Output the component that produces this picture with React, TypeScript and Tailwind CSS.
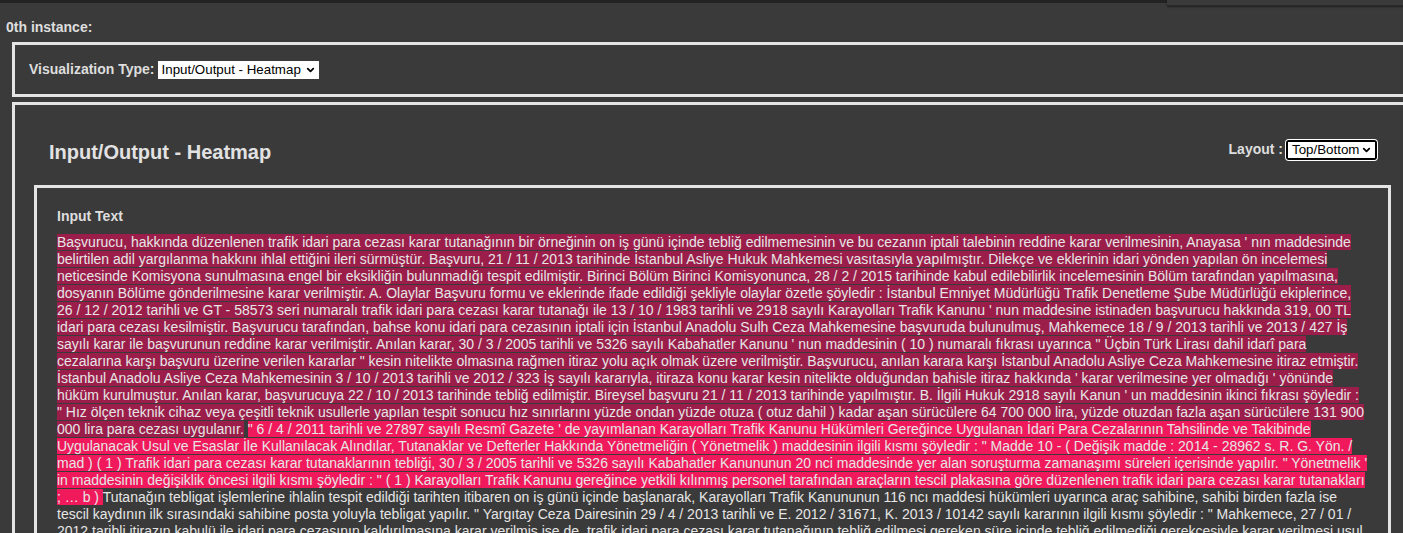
import { ChevronDown } from "lucide-react";

const DARK_SPAN =
  "Başvurucu, hakkında düzenlenen trafik idari para cezası karar tutanağının bir örneğinin on iş günü içinde tebliğ edilmemesinin ve bu cezanın iptali talebinin reddine karar verilmesinin, Anayasa ' nın maddesinde belirtilen adil yargılanma hakkını ihlal ettiğini ileri sürmüştür. Başvuru, 21 / 11 / 2013 tarihinde İstanbul Asliye Hukuk Mahkemesi vasıtasıyla yapılmıştır. Dilekçe ve eklerinin idari yönden yapılan ön incelemesi neticesinde Komisyona sunulmasına engel bir eksikliğin bulunmadığı tespit edilmiştir. Birinci Bölüm Birinci Komisyonunca, 28 / 2 / 2015 tarihinde kabul edilebilirlik incelemesinin Bölüm tarafından yapılmasına, dosyanın Bölüme gönderilmesine karar verilmiştir. A. Olaylar Başvuru formu ve eklerinde ifade edildiği şekliyle olaylar özetle şöyledir : İstanbul Emniyet Müdürlüğü Trafik Denetleme Şube Müdürlüğü ekiplerince, 26 / 12 / 2012 tarihli ve GT - 58573 seri numaralı trafik idari para cezası karar tutanağı ile 13 / 10 / 1983 tarihli ve 2918 sayılı Karayolları Trafik Kanunu ' nun maddesine istinaden başvurucu hakkında 319, 00 TL idari para cezası kesilmiştir. Başvurucu tarafından, bahse konu idari para cezasının iptali için İstanbul Anadolu Sulh Ceza Mahkemesine başvuruda bulunulmuş, Mahkemece 18 / 9 / 2013 tarihli ve 2013 / 427 İş sayılı karar ile başvurunun reddine karar verilmiştir. Anılan karar, 30 / 3 / 2005 tarihli ve 5326 sayılı Kabahatler Kanunu ' nun maddesinin ( 10 ) numaralı fıkrası uyarınca \" Üçbin Türk Lirası dahil idarî para cezalarına karşı başvuru üzerine verilen kararlar \" kesin nitelikte olmasına rağmen itiraz yolu açık olmak üzere verilmiştir. Başvurucu, anılan karara karşı İstanbul Anadolu Asliye Ceza Mahkemesine itiraz etmiştir. İstanbul Anadolu Asliye Ceza Mahkemesinin 3 / 10 / 2013 tarihli ve 2012 / 323 İş sayılı kararıyla, itiraza konu karar kesin nitelikte olduğundan bahisle itiraz hakkında ' karar verilmesine yer olmadığı ' yönünde hüküm kurulmuştur. Anılan karar, başvurucuya 22 / 10 / 2013 tarihinde tebliğ edilmiştir. Bireysel başvuru 21 / 11 / 2013 tarihinde yapılmıştır. B. İlgili Hukuk 2918 sayılı Kanun ' un maddesinin ikinci fıkrası şöyledir : \"\u00a0Hız ölçen teknik cihaz veya çeşitli teknik usullerle yapılan tespit sonucu hız sınırlarını yüzde ondan yüzde otuza ( otuz dahil ) kadar aşan sürücülere 64 700 000 lira, yüzde otuzdan fazla aşan sürücülere 131 900 000 lira para cezası uygulanır.";

const BRIGHT_SPAN =
  "\" 6 / 4 / 2011 tarihli ve 27897 sayılı Resmî Gazete ' de yayımlanan Karayolları Trafik Kanunu Hükümleri Gereğince Uygulanan İdari Para Cezalarının Tahsilinde ve Takibinde Uygulanacak Usul ve Esaslar İle Kullanılacak Alındılar, Tutanaklar ve Defterler Hakkında Yönetmeliğin ( Yönetmelik ) maddesinin ilgili kısmı şöyledir : \" Madde 10 - ( Değişik madde : 2014 - 28962 s. R. G. Yön. / mad ) ( 1 ) Trafik idari para cezası karar tutanaklarının tebliği, 30 / 3 / 2005 tarihli ve 5326 sayılı Kabahatler Kanununun 20 nci maddesinde yer alan soruşturma zamanaşımı süreleri içerisinde yapılır. \" Yönetmelik ' in maddesinin değişiklik öncesi ilgili kısmı şöyledir : \" ( 1 ) Karayolları Trafik Kanunu gereğince yetkili kılınmış personel tarafından araçların tescil plakasına göre düzenlenen trafik idari para cezası karar tutanakları ; … b ) ";

const PLAIN_TAIL =
  "Tutanağın tebligat işlemlerine ihlalin tespit edildiği tarihten itibaren on iş günü içinde başlanarak, Karayolları Trafik Kanununun 116 ncı maddesi hükümleri uyarınca araç sahibine, sahibi birden fazla ise tescil kaydının ilk sırasındaki sahibine posta yoluyla tebligat yapılır. \" Yargıtay Ceza Dairesinin 29 / 4 / 2013 tarihli ve E. 2012 / 31671, K. 2013 / 10142 sayılı kararının ilgili kısmı şöyledir : \" Mahkemece, 27 / 01 / 2012 tarihli itirazın kabulü ile idari para cezasının kaldırılmasına karar verilmiş ise de, trafik idari para cezası karar tutanağının tebliğ edilmesi gereken süre içinde tebliğ edilmediği gerekçesiyle karar verilmesi usul ve yasaya aykırıdır. Başvurucunun iddiaları yönünden yapılan incelemede, kabul edilebilirlik koşullarının bulunduğu anlaşılmıştır.";

function FakeSelect({
  label,
  className,
}: {
  label: string;
  className: string;
}) {
  return (
    <div className={`relative ${className}`}>
      <select
        defaultValue={label}
        className="block w-full h-full appearance-none bg-white text-black text-[13.33px] leading-[16px] py-0 pl-[4px] pr-[14px] outline-none font-['Liberation_Sans',Arial,sans-serif]"
      >
        <option>{label}</option>
      </select>
      <ChevronDown
        size={11}
        strokeWidth={4}
        className="absolute right-[3px] top-1/2 -translate-y-1/2 text-black pointer-events-none"
      />
    </div>
  );
}

export default function App() {
  return (
    <div className="h-screen w-full overflow-hidden bg-[#3a3a3a] font-['Liberation_Sans',Arial,sans-serif] text-[#dedede]">
      <div className="w-[1426px]">
        {/* Top strip */}
        <div className="flex h-[6px]">
          <div className="flex-1 h-[3px] bg-[#222222]" />
          <div className="w-[259px] h-[6px] bg-[#3a3a3a] border-b border-[#2a2a2a] shadow-[0_1px_2px_rgba(0,0,0,0.5)]" />
        </div>

        <div className="pl-[6px] pt-[13px] text-[14px] leading-[16px] font-bold">
          0th instance:
        </div>

        {/* Visualization type */}
        <div className="ml-[12px] mt-[7px] w-[1402px] h-[55px] border-[3px] border-[#e4e4e4] flex items-center px-[14px]">
          <span className="text-[14px] font-bold mr-[3px]">Visualization Type:</span>
          <FakeSelect label="Input/Output - Heatmap" className="w-[161px] h-[18px]" />
        </div>

        {/* Visualization panel */}
        <div className="ml-[12px] mt-[5px] w-[1402px] border-[3px] border-b-0 border-[#e4e4e4] pl-[19px] pr-[20px]">
          <div className="flex items-start justify-between pl-[15px] pr-[14px]">
            <h2 className="pt-[35px] text-[20px] leading-[24px] font-bold text-[#e2e2e2]">
              Input/Output - Heatmap
            </h2>
            <div className="pt-[34px] flex items-center">
              <span className="text-[14px] font-bold mr-[3px]">Layout :</span>
              <div className="rounded-[3px] border-2 border-black ring-1 ring-white bg-white">
                <FakeSelect label="Top/Bottom" className="w-[87px] h-[16px]" />
              </div>
            </div>
          </div>

          <div className="mt-[21px] border-[3px] border-b-0 border-[#e4e4e4] px-[20px] pt-[20px] pb-[40px]">
            <div className="text-[14px] leading-[16px] font-bold">Input Text</div>
            <p className="mt-[10px] text-[14px] leading-[17px] text-[#e6e6e6]">
              <span className="bg-[#9b1e4a]">{DARK_SPAN}</span>{" "}
              <span className="bg-[#f0195b]">{BRIGHT_SPAN}</span>
              {PLAIN_TAIL}
            </p>
          </div>
        </div>
      </div>
    </div>
  );
}
